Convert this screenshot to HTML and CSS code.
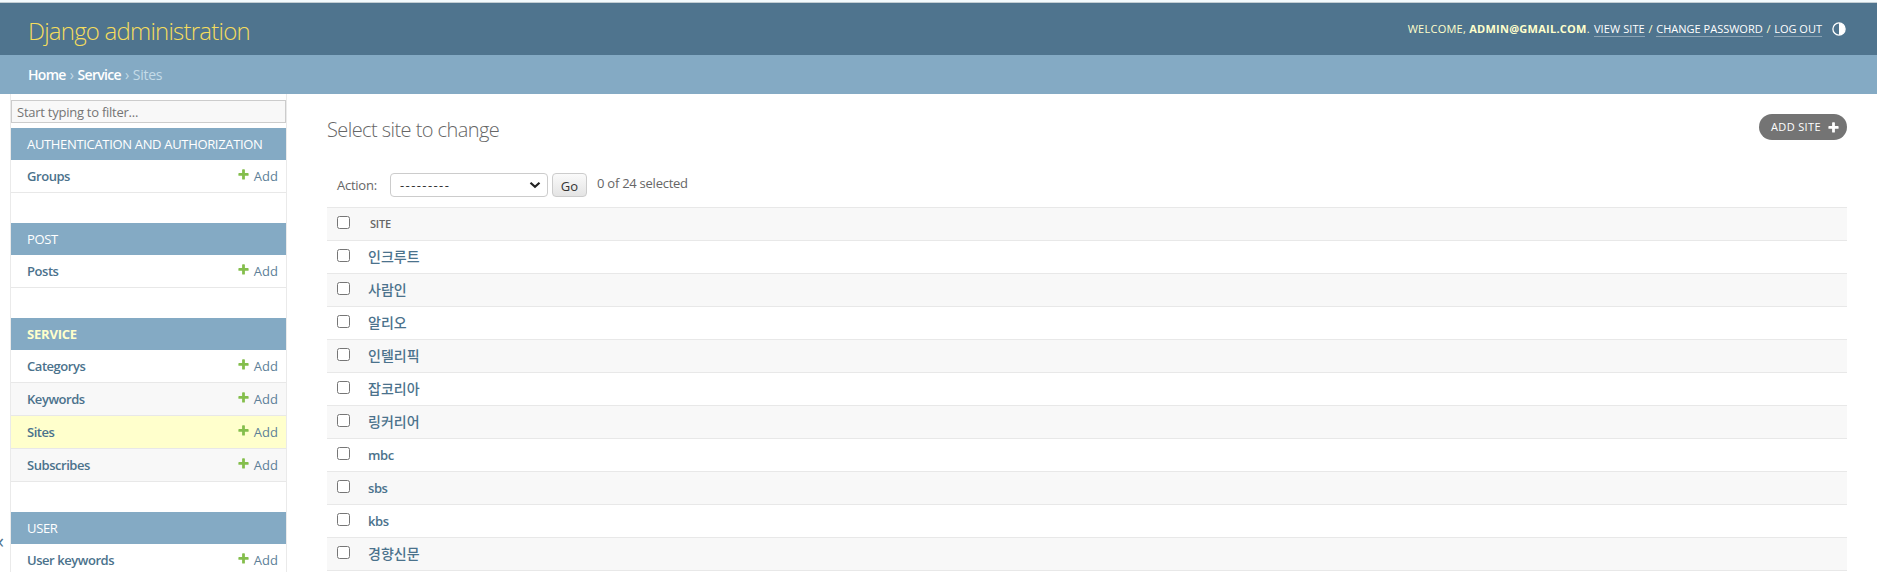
FILE: index.html
```html
<!DOCTYPE html>
<html lang="en">
<head>
<meta charset="utf-8">
<title>Select site to change | Django site admin</title>
<link rel="stylesheet" href="styles.css">
</head>
<body>
<svg class="defs" width="0" height="0" aria-hidden="true">
  <symbol id="plus" viewBox="0 0 1792 1792"><path d="M1600 796v192q0 40-28 68t-68 28h-416v416q0 40-28 68t-68 28H800q-40 0-68-28t-28-68v-416H288q-40 0-68-28t-28-68V796q0-40 28-68t68-28h416V284q0-40 28-68t68-28h192q40 0 68 28t28 68v416h416q40 0 68 28t28 68z"/></symbol>
</svg>
<div class="topline"></div>
<header class="header">
  <h1 class="brand">Django administration</h1>
  <div class="tools"><span class="welcome">Welcome, <strong>admin@gmail.com</strong>.</span><a class="view">View site</a><i>/</i><a class="change">Change password</a><i>/</i><a class="logout">Log out</a>
    <svg class="theme" viewBox="0 0 14 14"><circle cx="7" cy="7" r="6.1" fill="none" stroke="#fff" stroke-width="1.3"/><path d="M7 1a6 6 0 0 1 0 12z" fill="#fff"/></svg>
  </div>
</header>
<nav class="crumbs"><a>Home</a><span>›</span><a>Service</a><span>›</span><span>Sites</span></nav>
<div class="shell">
  <div class="toggle"><span>«</span></div>
  <aside class="sidebar">
    <input class="filter" type="text" placeholder="Start typing to filter...">
    <section class="app">
      <h2 class="auth">Authentication and Authorization</h2>
      <div class="model"><a>Groups</a><a class="add"><svg><use href="#plus"/></svg>Add</a></div>
    </section>
    <section class="app">
      <h2>Post</h2>
      <div class="model"><a>Posts</a><a class="add"><svg><use href="#plus"/></svg>Add</a></div>
    </section>
    <section class="app">
      <h2 class="current">Service</h2>
      <div class="model"><a>Categorys</a><a class="add"><svg><use href="#plus"/></svg>Add</a></div>
      <div class="model alt"><a>Keywords</a><a class="add"><svg><use href="#plus"/></svg>Add</a></div>
      <div class="model selected"><a>Sites</a><a class="add"><svg><use href="#plus"/></svg>Add</a></div>
      <div class="model alt"><a>Subscribes</a><a class="add"><svg><use href="#plus"/></svg>Add</a></div>
    </section>
    <section class="app">
      <h2>User</h2>
      <div class="model"><a>User keywords</a><a class="add"><svg><use href="#plus"/></svg>Add</a></div>
    </section>
  </aside>
  <main class="content">
    <div class="heading">
      <h2 class="title">Select site to change</h2>
      <a class="addsite"><span>Add site</span><svg><use href="#plus"/></svg></a>
    </div>
    <div class="actions">
      <label>Action:</label>
      <div class="select"><span>---------</span><svg viewBox="0 0 12 8"><path d="M1.500 1.700 6 5.800l4.500-4.100" fill="none" stroke="#222" stroke-width="2.200"/></svg></div>
      <button class="go">Go</button>
      <span class="counter">0 of 24 selected</span>
    </div>
    <div class="table">
      <div class="row head"><input type="checkbox"><span>Site</span></div>
      <div class="row"><input type="checkbox"><a>인크루트</a></div>
      <div class="row"><input type="checkbox"><a>사람인</a></div>
      <div class="row"><input type="checkbox"><a>알리오</a></div>
      <div class="row"><input type="checkbox"><a>인텔리픽</a></div>
      <div class="row"><input type="checkbox"><a>잡코리아</a></div>
      <div class="row"><input type="checkbox"><a>링커리어</a></div>
      <div class="row"><input type="checkbox"><a class="latin">mbc</a></div>
      <div class="row"><input type="checkbox"><a class="latin">sbs</a></div>
      <div class="row"><input type="checkbox"><a class="latin">kbs</a></div>
      <div class="row"><input type="checkbox"><a>경향신문</a></div>
    </div>
  </main>
</div>
</body>
</html>
```
FILE: styles.css
```css
* { box-sizing: border-box; }
html, body { height: 100%; }
body {
  margin: 0; overflow: hidden; background: #fff; color: #666;
  font: 13px/16px "Open Sans", "Noto Sans CJK KR", sans-serif;
  display: flex; flex-direction: column;
}
h1, h2 { margin: 0; font-weight: 400; }
.defs { position: absolute; }
.topline { flex: none; height: 3px; background: #f3fafd; border-bottom: 1px solid #c3ced4; }
.header {
  flex: none; height: 52px; padding: 0 31px 0 28px; background: #4f748e; color: #ffc;
  display: flex; justify-content: space-between;
}
.brand { font-size: 24px; line-height: 55px; font-weight: 300; color: #f5dd5d; letter-spacing: -.78px; white-space: nowrap; }
.tools { display: flex; align-items: flex-start; padding-top: 18px; font-size: 11px; line-height: 15px; text-transform: uppercase; white-space: nowrap; }
.tools a { color: #fff; border-bottom: 1px solid rgba(255,255,255,.35); height: 16px; }
.tools i { font-style: normal; width: 11.500px; text-align: center; }
.view { letter-spacing: .1px; }
.welcome { margin-right: 4px; letter-spacing: .26px; }
.theme { width: 14px; height: 14px; margin: 1px 0 0 10px; }
.crumbs { flex: none; height: 39px; padding-left: 28px; background: #84aac4; color: #c4dce8; font-size: 14px; line-height: 40px; display: flex; gap: 4px; letter-spacing: -.3px; }
.crumbs a { color: #fff; font-weight: 600; letter-spacing: -.7px; }
.shell { flex: 1; min-height: 0; display: flex; }
.toggle { flex: none; width: 10px; display: flex; justify-content: flex-start; align-items: flex-start; padding-top: 439px; overflow: hidden; font-size: 20px; color: #4f748e; }
.toggle span { margin-left: -6px; }
.sidebar { flex: none; width: 277px; border: solid #eaeaea; border-width: 0 1px; padding-top: 6px; overflow: hidden; }
.filter { display: block; width: 275px; height: 23px; margin: 0 0 5px; padding: 2px 5px 1px; border: 1px solid #ccc; background: #f8f8f8; font: inherit; letter-spacing: -.25px; }
.filter::placeholder { color: #757575; }
.app { margin-bottom: 30px; }
.app h2 { height: 32px; padding-left: 16px; background: #84aac4; color: #fff; font-size: 13px; line-height: 33px; text-transform: uppercase; white-space: nowrap; letter-spacing: -.33px; }
.app .current { color: #ffc; font-weight: 700; letter-spacing: -.2px; }
.model { height: 33px; padding: 0 8px 0 16px; border-bottom: 1px solid #e8e8e8; display: flex; justify-content: space-between; line-height: 33px; }
.model a { color: #4b728c; font-weight: 600; letter-spacing: -.45px; }
.model .add { display: flex; font-weight: 400; color: #5d7f98; letter-spacing: 0; }
.add svg { width: 13px; height: 13px; margin: 8px 4px 0 0; fill: #84be4c; }
.alt { background: #f8f8f8; }
.selected { background: #ffc; }
.content { flex: 1; padding: 20px 30px 0 40px; }
.heading { height: 59px; display: flex; justify-content: space-between; align-items: flex-start; }
.title { font-size: 20px; line-height: 31px; font-weight: 300; letter-spacing: -.57px; }
.addsite { display: flex; align-items: center; justify-content: space-between; width: 88px; height: 26px; padding: 0 7px 0 12px; border-radius: 13px; background: #747474; color: #fff; font-size: 11px; text-transform: uppercase; letter-spacing: .35px; }
.addsite svg { width: 13px; height: 13px; fill: #fff; }
.actions { display: flex; height: 34px; padding-left: 10px; line-height: 25px; letter-spacing: -.25px; }
.actions label { width: 53px; }
.select { width: 158px; height: 24px; margin-right: 4px; padding: 0 6px 0 9px; border: 1px solid #ccc; border-radius: 4px; display: flex; justify-content: space-between; align-items: center; color: #333; letter-spacing: 1.400px; }
.select svg { width: 12px; height: 8px; }
.go { width: 35px; height: 24px; margin-right: 10px; padding: 0 0 2px; border: 1px solid #ccc; border-radius: 4px; background: linear-gradient(#fafafa, #e4e4e4); color: #333; font: inherit; }
.counter { line-height: 21px; }
.row { height: 33px; border-bottom: 1px solid #e8e8e8; padding-left: 10px; display: flex; align-items: flex-start; }
.row:nth-child(even) { background: #fff; }
.row:nth-child(odd) { background: #f8f8f8; }
.head { height: 34px; border-top: 1px solid #e8e8e8; }
.row input { width: 13px; height: 13px; margin: 8px 18px 0 0; }
.row a { color: #4b728c; font-weight: 500; font-size: 14px; line-height: 31px; }
.row .latin { font-size: 13px; font-weight: 600; line-height: 33px; letter-spacing: -.4px; }
.head span { margin-left: 2px; font-size: 11px; line-height: 32px; font-weight: 600; letter-spacing: -.2px; text-transform: uppercase; }
```
